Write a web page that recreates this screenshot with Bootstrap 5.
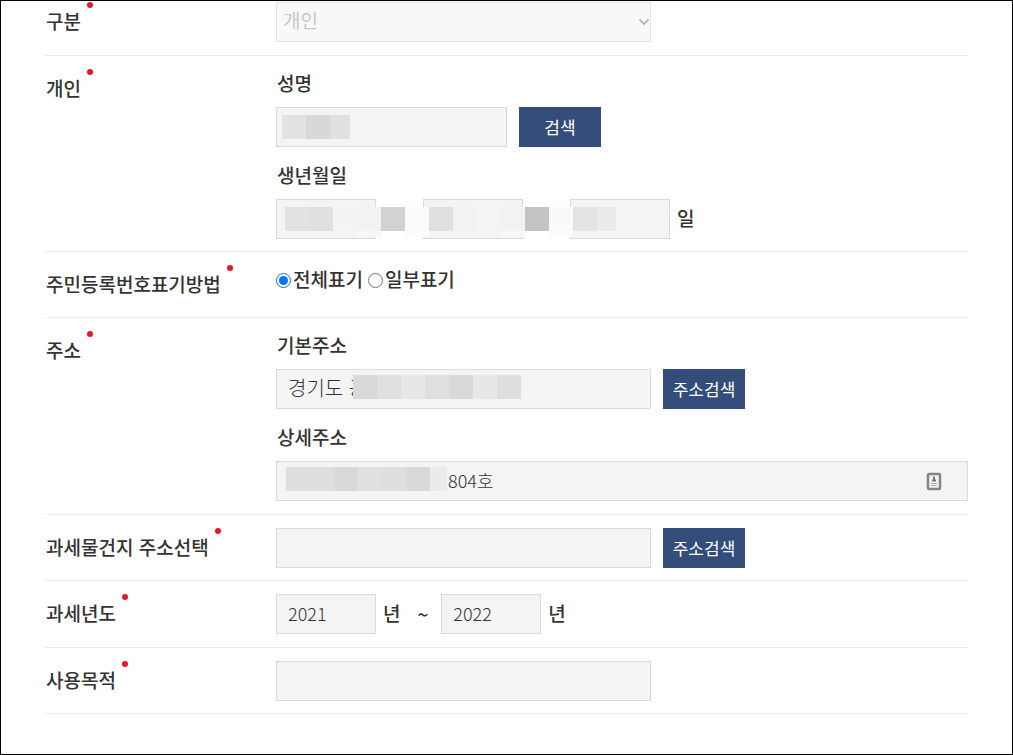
<!DOCTYPE html>
<html lang="ko">
<head>
<meta charset="utf-8">
<meta name="viewport" content="width=device-width, initial-scale=1">
<title>신청서</title>
<link href="https://cdn.jsdelivr.net/npm/bootstrap@5.3.0/dist/css/bootstrap.min.css" rel="stylesheet">
<style>
  body { font-family: "Noto Sans CJK KR", sans-serif; font-size: 19px; line-height: 28px; color: #333; background: #fff; }
  .frame { border: 1px solid #000; padding: 0 44px; }
  .apply-form { margin-top: -12px; }
  .form-line { border-bottom: 1px solid #ebebeb; padding: 13px 0 12px; }
  .form-line.roomy { padding-bottom: 13px; }
  .line-title { width: 231px; padding-left: 1px; font-weight: 500; }
  .line-title label, .line-title .title-text { margin-top: 5px; }
  .required-dot { width: 6px; height: 6px; margin-left: 6px; border-radius: 50%; background: #e61923; }
  .line-body { min-height: 40px; min-width: 0; font-weight: 500; }
  .sub-label { display: block; margin-bottom: 10px; padding-left: 1px; }
  .field-block + .field-block { margin-top: 14px; }
  .field-row { gap: 12px; }
  .field-box { height: 40px; padding: 0 11px 3px; border: 1px solid #dadada; border-radius: 0; background-color: #f4f4f4; color: #333; font-size: 18px; font-weight: 300; }
  .w-field { width: 375px; }
  .w-name { width: 231px; }
  .w-short { width: 100px; }
  .addr-text { font-size: 20px; }
  .detail-text { padding-left: 171px; }
  .kind-select, .kind-select:disabled { padding: 0 6px 3px; font-size: 19px; font-weight: 400; color: #c8c8c8; border-color: #e3e3e3; background: #f8f8f8 url("data:image/svg+xml,%3Csvg xmlns='http://www.w3.org/2000/svg' viewBox='0 0 12 8'%3E%3Cpath d='M1.5 1.5 6 6l4.500-4.500' fill='none' stroke='%23bbb' stroke-width='2'/%3E%3C/svg%3E") no-repeat right 0 center / 12px 8px; opacity: 1; }
  .btn-search { width: 82px; height: 40px; padding: 0; border: 0; border-radius: 0; background: #334c7a; color: #fff; font-size: 17px; font-weight: 400; }
  .btn-search:hover { background: #29406a; color: #fff; }
  .date-row { gap: 47px; }
  .year-row, .day-cell { gap: 7px; }
  .year-row label, .day-cell label { margin-bottom: 2px; }
  .tilde { margin: 0 6px 0 10px; }
  .radio-row { gap: 5px; }
  .radio-row label { gap: 2px; }
  .radio-row input { width: 15px; height: 15px; margin: 2px 0 0; }
  .masked { position: absolute; height: 24px; pointer-events: none; }
  .mask-name { left: 6px; top: 8px; width: 68px; background: linear-gradient(90deg, #e2e2e2 24px, #d8d8d8 24px 48px, #e0e0e0 48px); }
  .mask-birth { left: 9px; top: 8px; width: 331px; height: 30px; background:
    linear-gradient(90deg, #e2e2e2 24px, #e0e0e0 24px 48px, #f3f3f3 48px 72px, #f2f2f2 72px 96px, #d2d2d2 96px 120px, #fbfbfb 120px 144px, #e0e0e0 144px 168px, #f2f2f2 168px 192px, #f4f4f4 192px 216px, #f2f2f2 216px 240px, #c4c4c4 240px 264px, #fafafa 264px 288px, #e3e3e3 288px 312px, #ebebeb 312px) 0 0 / 100% 24px no-repeat,
    linear-gradient(#fcfcfc, #fcfcfc) 120px 24px / 24px 6px no-repeat,
    linear-gradient(#fcfcfc, #fcfcfc) 264px 24px / 24px 6px no-repeat,
    linear-gradient(#f7f7f7, #f7f7f7) 72px 24px / 24px 6px no-repeat,
    linear-gradient(#f7f7f7, #f7f7f7) 216px 24px / 24px 6px no-repeat; }
  .mask-addr { left: 77px; top: 6px; width: 168px; background: linear-gradient(90deg, #d9d9d9 24px, #dfdfdf 24px 48px, #e7e7e7 48px 72px, #dfdfdf 72px 96px, #d9d9d9 96px 120px, #e7e7e7 120px 144px, #dedede 144px); }
  .mask-detail { left: 10px; top: 6px; width: 161px; background: linear-gradient(90deg, #dedede 48px, #d9d9d9 48px 72px, #e0e0e0 72px 96px, #dedede 96px 120px, #d9d9d9 120px 144px, #ebebeb 144px); }
  .fill-icon { position: absolute; right: 26px; top: 11px; }
</style>
</head>
<body>
<main class="frame min-vh-100 overflow-hidden">
  <form class="apply-form">
    <div class="form-line roomy d-flex">
      <div class="line-title d-flex align-items-start flex-shrink-0"><label for="kind">구분</label><span class="required-dot"></span></div>
      <div class="line-body flex-grow-1">
        <select id="kind" class="form-select field-box w-field kind-select" disabled><option>개인</option></select>
      </div>
    </div>

    <div class="form-line d-flex">
      <div class="line-title d-flex align-items-start flex-shrink-0"><span class="title-text">개인</span><span class="required-dot"></span></div>
      <div class="line-body flex-grow-1">
        <div class="field-block">
          <label class="sub-label" for="name">성명</label>
          <div class="field-row d-flex position-relative">
            <input id="name" type="text" class="form-control field-box w-name">
            <span class="masked mask-name"></span>
            <button type="button" class="btn btn-search">검색</button>
          </div>
        </div>
        <div class="field-block">
          <label class="sub-label" for="birth-year">생년월일</label>
          <div class="date-row d-flex position-relative">
            <input id="birth-year" type="text" class="form-control field-box w-short">
            <input type="text" class="form-control field-box w-short" aria-label="월">
            <div class="day-cell d-flex align-items-center">
              <input id="birth-day" type="text" class="form-control field-box w-short">
              <label for="birth-day">일</label>
            </div>
            <span class="masked mask-birth"></span>
          </div>
        </div>
      </div>
    </div>

    <div class="form-line d-flex">
      <div class="line-title d-flex align-items-start flex-shrink-0"><span class="title-text">주민등록번호표기방법</span><span class="required-dot"></span></div>
      <div class="line-body radio-row flex-grow-1 d-flex align-items-start">
        <label class="d-flex align-items-center"><input type="radio" name="display" checked>전체표기</label>
        <label class="d-flex align-items-center"><input type="radio" name="display">일부표기</label>
      </div>
    </div>

    <div class="form-line roomy d-flex">
      <div class="line-title d-flex align-items-start flex-shrink-0"><span class="title-text">주소</span><span class="required-dot"></span></div>
      <div class="line-body flex-grow-1">
        <div class="field-block">
          <label class="sub-label" for="addr">기본주소</label>
          <div class="field-row d-flex position-relative">
            <input id="addr" type="text" class="form-control field-box addr-text w-field" value="경기도 공">
            <span class="masked mask-addr"></span>
            <button type="button" class="btn btn-search">주소검색</button>
          </div>
        </div>
        <div class="field-block">
          <label class="sub-label" for="addr-detail">상세주소</label>
          <div class="position-relative">
            <input id="addr-detail" type="text" class="form-control field-box detail-text" value="804호">
            <span class="masked mask-detail"></span>
            <svg class="fill-icon" width="16" height="19" viewBox="0 0 16 19" aria-hidden="true">
              <rect x="2" y="2" width="12" height="15" rx="1" fill="#f4f4f4" stroke="#858585" stroke-width="2.500"/>
              <path d="M8 4.500v4M6 8.500h4" stroke="#777" stroke-width="2"/>
              <path d="M5 11.500h6M5.500 13.500h5" stroke="#aaa"/>
            </svg>
          </div>
        </div>
      </div>
    </div>

    <div class="form-line d-flex">
      <div class="line-title d-flex align-items-start flex-shrink-0"><label for="property">과세물건지 주소선택</label><span class="required-dot"></span></div>
      <div class="line-body field-row flex-grow-1 d-flex">
        <input id="property" type="text" class="form-control field-box w-field">
        <button type="button" class="btn btn-search">주소검색</button>
      </div>
    </div>

    <div class="form-line roomy d-flex">
      <div class="line-title d-flex align-items-start flex-shrink-0"><span class="title-text">과세년도</span><span class="required-dot"></span></div>
      <div class="line-body year-row flex-grow-1 d-flex align-items-center">
        <input id="year-from" type="text" class="form-control field-box w-short" value="2021">
        <label for="year-from">년</label>
        <span class="tilde">~</span>
        <input id="year-to" type="text" class="form-control field-box w-short" value="2022">
        <label for="year-to">년</label>
      </div>
    </div>

    <div class="form-line d-flex">
      <div class="line-title d-flex align-items-start flex-shrink-0"><label for="purpose">사용목적</label><span class="required-dot"></span></div>
      <div class="line-body flex-grow-1">
        <input id="purpose" type="text" class="form-control field-box w-field">
      </div>
    </div>
  </form>
</main>
<script src="https://cdn.jsdelivr.net/npm/bootstrap@5.3.0/dist/js/bootstrap.bundle.min.js"></script>
</body>
</html>
